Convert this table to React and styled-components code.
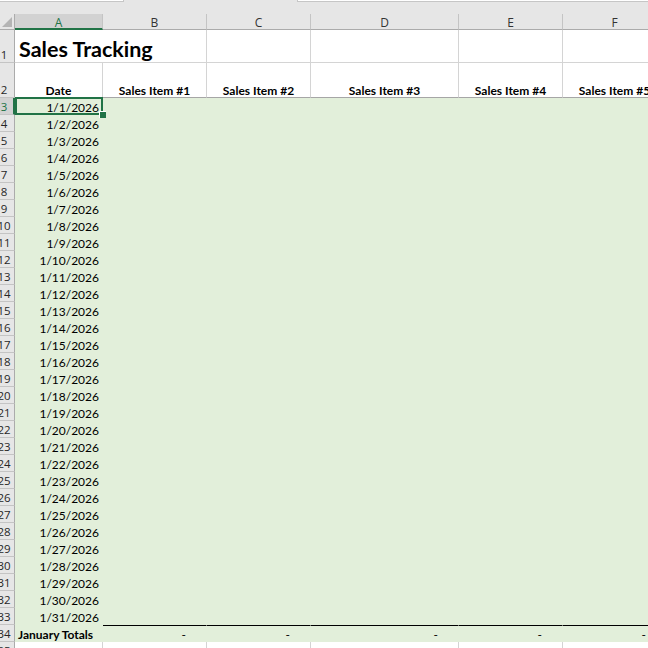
import React from 'react';
import styled, { createGlobalStyle, css } from 'styled-components';

const GlobalStyle = createGlobalStyle`
  html, body { margin: 0; padding: 0; background: #ffffff; }
  body { width: 648px; height: 648px; overflow: hidden; }
  * { box-sizing: border-box; }
`;

const GREEN = '#217346';
const FILL = '#e2efda';

const Sheet = styled.div`
  width: 648px;
  height: 648px;
  overflow: hidden;
  background: #e6e6e6;
  display: flex;
  flex-direction: column;
`;

const TopStrip = styled.div`
  height: 14px;
  flex: none;
  display: flex;
  align-items: flex-start;
  background: #e6e6e6;
`;

const NameBox = styled.div`
  width: 124px;
  height: 2px;
  background: #ffffff;
  border-right: 1px solid #c6c6c6;
  border-bottom: 1px solid #c6c6c6;
`;

const FormulaBox = styled.div`
  margin-left: 173px;
  flex: 1;
  height: 2px;
  background: #ffffff;
  border-left: 1px solid #c6c6c6;
  border-bottom: 1px solid #c6c6c6;
`;

const Grid = styled.div`
  display: grid;
  grid-template-columns: 15px 88px 104px 104px 148px 104px 104px;
  grid-template-rows: 16px 33px 35px repeat(32, 17px) 17px;
  width: 667px;
  font-family: Lato, "Liberation Sans", sans-serif;
  color: #000;
  background: #ffffff;
`;

const Corner = styled.div`
  background: #e6e6e6;
  border-right: 1px solid #ababab;
  border-bottom: 1px solid #ababab;
  display: flex;
  align-items: flex-end;
  justify-content: flex-end;
  padding: 0 2px 2px 0;
`;

const ColHeader = styled.div`
  background: ${p => (p.$selected ? '#d2d2d2' : '#e6e6e6')};
  color: ${p => (p.$selected ? GREEN : '#333333')};
  border-right: 1px solid #c4c4c4;
  border-bottom: ${p => (p.$selected ? `2px solid ${GREEN}` : '1px solid #ababab')};
  font-family: "Open Sans", "Noto Sans", sans-serif;
  font-size: 12px;
  line-height: 16px;
  text-align: center;
  padding-top: 1px;
`;

const RowHeader = styled.div`
  background: ${p => (p.$selected ? '#d2d2d2' : '#e6e6e6')};
  color: ${p => (p.$selected ? GREEN : '#262626')};
  border-bottom: 1px solid #c4c4c4;
  border-right: ${p => (p.$selected ? `2px solid ${GREEN}` : '1px solid #ababab')};
  font-family: "Open Sans", "Noto Sans", sans-serif;
  font-size: 11.5px;
  line-height: 14px;
  overflow: hidden;
  display: flex;
  align-items: flex-end;
  padding-bottom: 0;
`;

const RowNum = styled.span`
  flex: none;
  width: 24px;
  margin-left: -8px;
  text-align: center;
`;

const Cell = styled.div`
  position: relative;
  display: flex;
  align-items: flex-end;
  justify-content: ${p => (p.$align === 'right' ? 'flex-end' : p.$align === 'center' ? 'center' : 'flex-start')};
  padding: 0 3px 0 3px;
  white-space: nowrap;
  font-size: 12px;
  line-height: 13px;
  font-weight: ${p => (p.$bold ? 700 : 400)};
  background: ${p => (p.$fill ? FILL : '#ffffff')};
  border-right: 1px solid ${p => (p.$fill ? 'transparent' : '#d4d4d4')};
  border-bottom: 1px solid ${p => (p.$fill ? 'transparent' : '#d4d4d4')};
  ${p => p.$rule && css`border-top: 1px solid #000000;`}
  ${p => p.$span && css`grid-column: span ${p.$span};`}
`;

const HeadCell = styled(Cell)`
  border-bottom: 1px solid #a6a6a6;
`;

const TotalCell = styled(Cell)`
  padding-right: 20px;
`;

const TitleCell = styled(Cell)`
  font-size: 21.5px;
  line-height: 24px;
  padding-left: 4px;
  padding-bottom: 1px;
`;

const ActiveCell = styled(Cell)`
  z-index: 2;
  overflow: visible;
  &::after {
    content: '';
    position: absolute;
    left: 0;
    top: -1px;
    right: -1px;
    bottom: -1px;
    border: 2px solid ${GREEN};
    pointer-events: none;
  }
  &::before {
    content: '';
    position: absolute;
    width: 6px;
    height: 6px;
    right: -4px;
    bottom: -4px;
    background: ${GREEN};
    border-top: 1px solid #ffffff;
    border-left: 1px solid #ffffff;
    z-index: 3;
  }
`;

const CornerTriangle = () => (
  <svg width="10" height="10" viewBox="0 0 10 10">
    <polygon points="10,0 10,10 0,10" fill="#b4b4b4" />
  </svg>
);

const columns = ['A', 'B', 'C', 'D', 'E', 'F'];
const items = ['Sales Item #1', 'Sales Item #2', 'Sales Item #3', 'Sales Item #4', 'Sales Item #5'];

export default function App() {
  const dayRows = Array.from({ length: 31 }, (_, i) => i + 1);
  return (
    <>
      <GlobalStyle />
      <Sheet>
        <TopStrip>
          <NameBox />
          <FormulaBox />
        </TopStrip>
        <Grid>
          <Corner>
            <CornerTriangle />
          </Corner>
          {columns.map(c => (
            <ColHeader key={c} $selected={c === 'A'}>{c}</ColHeader>
          ))}

          <RowHeader><RowNum>1</RowNum></RowHeader>
          <TitleCell $span={2} $bold>Sales Tracking</TitleCell>
          <Cell />
          <Cell />
          <Cell />
          <Cell />

          <RowHeader><RowNum>2</RowNum></RowHeader>
          <HeadCell $bold $align="center">Date</HeadCell>
          {items.map(t => (
            <HeadCell key={t} $bold $align="center">{t}</HeadCell>
          ))}

          {dayRows.map(d => {
            const r = d + 2;
            const DateCell = d === 1 ? ActiveCell : Cell;
            return (
              <React.Fragment key={r}>
                <RowHeader $selected={d === 1}><RowNum>{r}</RowNum></RowHeader>
                <DateCell $fill $align="right">{`1/${d}/2026`}</DateCell>
                {items.map(t => (
                  <Cell key={t} $fill />
                ))}
              </React.Fragment>
            );
          })}

          <RowHeader><RowNum>34</RowNum></RowHeader>
          <Cell $fill $bold>January Totals</Cell>
          {items.map(t => (
            <TotalCell key={t} $fill $rule $align="right">-</TotalCell>
          ))}

          <RowHeader><RowNum>35</RowNum></RowHeader>
          {columns.map(c => (
            <Cell key={c} />
          ))}
        </Grid>
      </Sheet>
    </>
  );
}
